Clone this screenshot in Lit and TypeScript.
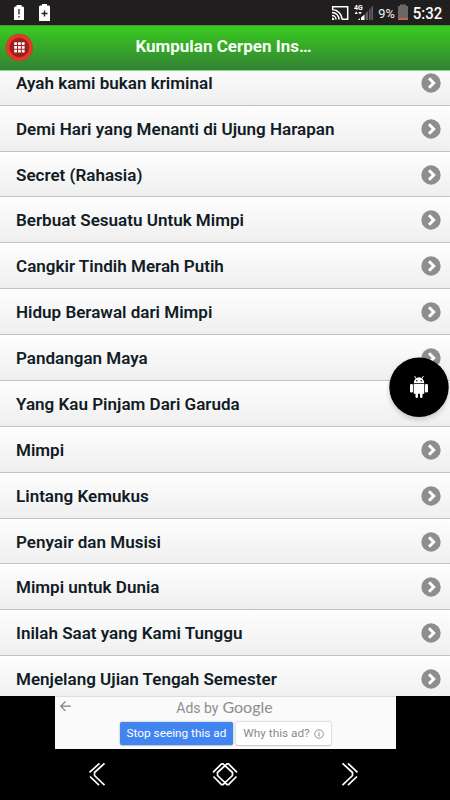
import { LitElement, html, css } from "lit";
import { customElement } from "lit/decorators.js";

const STORIES = [
  "Ayah kami bukan kriminal",
  "Demi Hari yang Menanti di Ujung Harapan",
  "Secret (Rahasia)",
  "Berbuat Sesuatu Untuk Mimpi",
  "Cangkir Tindih Merah Putih",
  "Hidup Berawal dari Mimpi",
  "Pandangan Maya",
  "Yang Kau Pinjam Dari Garuda",
  "Mimpi",
  "Lintang Kemukus",
  "Penyair dan Musisi",
  "Mimpi untuk Dunia",
  "Inilah Saat yang Kami Tunggu",
  "Menjelang Ujian Tengah Semester",
];

@customElement("app-root")
export class AppRoot extends LitElement {
  static styles = css`
    :host {
      display: flex;
      flex-direction: column;
      position: relative;
      width: 450px;
      height: 800px;
      overflow: hidden;
      background: #000;
      font-family: Roboto, "Noto Sans", sans-serif;
    }
    svg { display: block; flex: none; }
    .status {
      height: 25px;
      flex: none;
      background: #211e20;
      color: #fff;
      display: flex;
      justify-content: space-between;
    }
    .header {
      height: 46px;
      flex: none;
      box-sizing: border-box;
      border-top: 1px solid #3d9a2c;
      border-bottom: 1px solid #8fdc86;
      background: linear-gradient(#39cb20, #338233);
      display: grid;
      grid-template-columns: 40px 1fr 43px;
      align-items: center;
    }
    .menu { margin: -2px 0 0 5px; }
    .title {
      color: #f4fff2;
      font-weight: 700;
      font-size: 17px;
      line-height: 22px;
      text-align: center;
      white-space: nowrap;
      margin-top: -4px;
    }
    .view { height: 625px; flex: none; overflow: hidden; background: #eee; }
    .list { margin-top: -11.2px; }
    .row {
      height: 45.88px;
      box-sizing: border-box;
      border-bottom: 1px solid #c2c2c2;
      box-shadow: inset 0 1px 0 #fff;
      background: linear-gradient(#fefefe, #efefef);
      display: flex;
      align-items: center;
      justify-content: space-between;
      padding: 1px 9px 0 16px;
      color: #111c26;
      font-weight: 600;
      font-size: 17.04px;
      line-height: 22px;
      white-space: nowrap;
    }
    .fab { position: absolute; left: 386px; top: 354px; }
    .ad {
      width: 341px;
      height: 53px;
      flex: none;
      margin-left: 55px;
      box-sizing: border-box;
      background: #fafafa;
      border-top: 1px solid #ddd;
      display: grid;
      grid-template-columns: 20px 301px 20px;
    }
    .back { margin: 3px 0 0 4px; }
    .adbody { display: flex; flex-direction: column; align-items: center; }
    .by {
      box-sizing: border-box;
      color: #8e8e8e;
      font-size: 14px;
      line-height: 20px;
      height: 25px;
      padding-top: 1px;
      display: flex;
      gap: 4px;
      white-space: nowrap;
      transform: translateX(-1px);
    }
    .google { font-family: Lato, sans-serif; font-size: 16px; line-height: 18px; }
    .btns { display: flex; gap: 3px; }
    .btn {
      height: 23px;
      box-sizing: border-box;
      border-radius: 2px;
      font-size: 11.8px;
      line-height: 23px;
      white-space: nowrap;
      box-shadow: 0 0 2px rgba(0, 0, 0, 0.35), 0 1px 1px rgba(0, 0, 0, 0.12);
      display: flex;
      align-items: center;
      justify-content: center;
    }
    .stop { width: 113px; background: #4285f0; color: #fff; }
    .why { width: 95px; background: #fff; color: #8a8a8a; gap: 4px; }
    .nav { height: 51px; flex: none; }
  `;

  private chevron() {
    return html`<svg width="20" height="20" viewBox="0 0 20 20">
      <circle cx="10" cy="10" r="9.7" fill="#8e8e8e" />
      <path d="M8 5.2 12.7 10 8 14.8" fill="none" stroke="#fff" stroke-width="3" />
    </svg>`;
  }

  render() {
    return html`
      <div class="status">
        <svg width="60" height="25" viewBox="0 0 60 25">
          <path fill="#fff" d="M16.500 5h5v1.500H23l1 1V20H14V7.500l1-1h1.500z" />
          <path stroke="#333" stroke-width="1.400" d="M19 9v5.500M19 16v1.500" />
          <path fill="#fff" d="M42 4h5v1.500h2l1 1V21H39V6.500l1-1h2z" />
          <path stroke="#222" stroke-width="1.400" d="M41.500 13.500h6M44.500 10.500v6" />
        </svg>
        <svg width="120" height="25" viewBox="330 0 120 25">
          <path fill="none" stroke="#fff" stroke-width="1.500" d="M332.700 10V6.700h15v12.600h-5.500M332 12.500a7 7 0 0 1 7 7M332 9.600a10 10 0 0 1 10 9.900M332 15.500a4 4 0 0 1 4 4" />
          <path fill="#fff" d="M332 17.500a2.200 2.200 0 0 1 2.200 2.500H332z" />
          <text x="354" y="10" font-size="7" font-weight="700" fill="#fff">4G</text>
          <path fill="#fff" d="M354.500 14l1.700-2.500 1.700 2.500zM358.300 12h3.500l-1.800 2.500z" />
          <path fill="#fff" d="M358 20l2-2v2zM361 17.500l3.500-3v5.500H361z" />
          <path fill="#626062" d="M365.500 13.500l2.500-2.500V20h-2.500zM369 10l4-4.500V20h-4z" />
          <path stroke="#211e20" stroke-width=".7" d="M371 7v13" />
          <text x="378.300" y="17.500" font-size="12.500" textLength="16.500" lengthAdjust="spacingAndGlyphs" fill="#f0f0f0">9%</text>
          <path fill="#6a6768" d="M400 4.500h6V6h2v14h-10V6h2z" />
          <path fill="#c1664a" d="M398 18h10v2h-10z" />
          <text x="412.700" y="19" font-size="16.500" font-weight="500" textLength="29.500" lengthAdjust="spacingAndGlyphs" fill="#fff">5:32</text>
        </svg>
      </div>

      <div class="header">
        <svg class="menu" width="29" height="29" viewBox="0 0 29 29">
          <circle cx="14.300" cy="14.500" r="13.700" fill="#b64a26" />
          <circle cx="14.300" cy="14.500" r="12.700" fill="#e63a2c" />
          <circle cx="14.300" cy="14.500" r="9.800" fill="#9e1f1a" stroke="#c22b22" stroke-width="1" />
          <path fill="#fff" d="M9.200 9.200h2.800v2.800H9.200zM13 9.200h2.800v2.800H13zM16.800 9.200h2.800v2.800h-2.800zM9.200 13h2.800v2.800H9.200zM13 13h2.800v2.800H13zM16.800 13h2.800v2.800h-2.800zM9.200 16.800h2.800v2.800H9.200zM13 16.800h2.800v2.800H13zM16.800 16.800h2.800v2.800h-2.800z" />
        </svg>
        <div class="title">Kumpulan Cerpen Ins…</div>
      </div>

      <div class="view">
        <div class="list">
          ${STORIES.map((s) => html`<div class="row"><span>${s}</span>${this.chevron()}</div>`)}
        </div>
      </div>

      <div class="ad">
        <svg class="back" width="13" height="13" viewBox="0 0 13 13">
          <path d="M11.800 6.200H2M6.500 1.500 1.800 6.200l4.700 4.700" fill="none" stroke="#808080" stroke-width="1.200" />
        </svg>
        <div class="adbody">
          <div class="by"><span>Ads by</span><span class="google">Google</span></div>
          <div class="btns">
            <div class="btn stop">Stop seeing this ad</div>
            <div class="btn why">
              <span>Why this ad?</span>
              <svg width="10" height="10" viewBox="0 0 10 10">
                <circle cx="5" cy="5" r="4.300" fill="none" stroke="#8a8a8a" stroke-width=".9" />
                <path d="M5 4.300v3.200M5 2.400v1.100" stroke="#8a8a8a" stroke-width="1.100" />
              </svg>
            </div>
          </div>
        </div>
      </div>

      <svg class="nav" width="450" height="51" viewBox="0 749 450 51">
        <g fill="none" stroke="#fff" stroke-width="1.700" stroke-linejoin="round">
          <path d="M99.500 763.300 89.500 772.300M104.500 763.300 94.500 772.500v3l10 9.700M90 776.500l9 8.700" />
          <path d="M342.500 763.300 352.500 772.500v3l-10 9.700M348 763.300l9.500 9M357 776.500l-9 8.700" />
          <path d="M213 772.300l8.500-8.500h1.500l9.500 8.700v3l-9.500 9.200h-1.500l-8-8.200M237 772.300l-8.500-8.500H227l-9.500 8.700v3l9.500 9.200h1.500l8-8.200" />
        </g>
      </svg>

      <svg class="fab" width="64" height="72" viewBox="386 354 64 72">
        <defs>
          <filter id="soft" x="-30%" y="-30%" width="160%" height="160%"><feGaussianBlur stdDeviation="3" /></filter>
        </defs>
        <circle cx="419" cy="390" r="29" fill="#000" opacity=".22" filter="url(#soft)" />
        <circle cx="419" cy="387.300" r="29.700" fill="#000" />
        <g fill="#fff">
          <path d="M413.700 383.300a5.300 6 0 0 1 10.600 0z" />
          <path d="M413.700 384h10.600v9.700h-1.800v3a1.200 1.200 0 0 1-2.500 0v-3h-2v3a1.200 1.200 0 0 1-2.500 0v-3h-1.800z" />
          <rect x="410" y="384" width="3" height="8.500" rx="1.300" />
          <rect x="425" y="384" width="3" height="8.500" rx="1.300" />
        </g>
        <path d="M414.500 376l2 3M423.500 376l-2 3" stroke="#fff" stroke-width=".9" />
        <circle cx="416.800" cy="380.800" r=".7" /><circle cx="421.200" cy="380.800" r=".7" />
      </svg>
    `;
  }
}
